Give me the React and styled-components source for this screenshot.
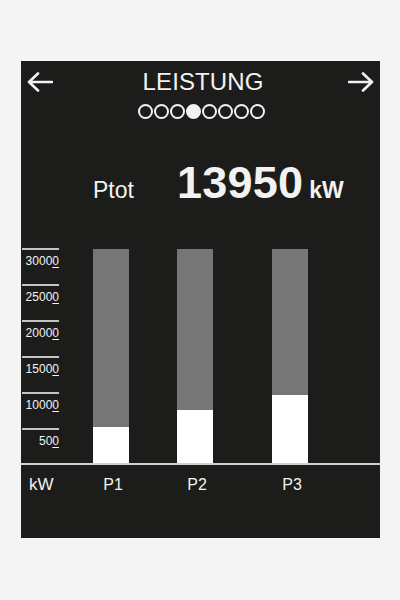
import styled, { createGlobalStyle } from 'styled-components';

const GlobalStyle = createGlobalStyle`
  html, body {
    margin: 0;
    padding: 0;
    background: #f4f4f4;
    font-family: "Liberation Sans", Arial, sans-serif;
  }
`;

const Panel = styled.div`
  margin: 61px 0 0 21px;
  width: 359px;
  height: 477px;
  background: #1c1c1a;
  color: #f2f2f2;
  display: flex;
  flex-direction: column;
`;

const Header = styled.div`
  display: grid;
  grid-template-columns: 26px 1fr 26px;
  align-items: center;
  height: 24px;
  margin-top: 9px;
  padding: 0 6px;
`;

const Title = styled.div`
  font-size: 24px;
  line-height: 24px;
  text-align: center;
  padding-left: 5px;
  letter-spacing: 0.1px;
`;

const Dots = styled.div`
  display: flex;
  justify-content: center;
  gap: 1px;
  margin-top: 10px;
  padding-left: 1px;
`;

const Dot = styled.span`
  width: 15px;
  height: 15px;
  box-sizing: border-box;
  border-radius: 50%;
  border: 2px solid #f2f2f2;
  background: ${(p) => (p.$active ? '#f2f2f2' : 'transparent')};
`;

const Total = styled.div`
  display: flex;
  align-items: baseline;
  margin-top: 41px;
  padding-left: 72px;
  line-height: 1;
`;

const TotalLabel = styled.span`
  font-size: 23px;
  width: 84px;
`;

const TotalValue = styled.span`
  font-size: 45px;
  font-weight: bold;
  letter-spacing: 0.2px;
`;

const TotalUnit = styled.span`
  font-size: 23px;
  font-weight: bold;
  margin-left: 6px;
`;

const Chart = styled.div`
  display: grid;
  grid-template-columns: 72px 36px 48px 36px 59px 36px 1fr;
  margin-top: 43px;
  height: 215px;
`;

const Axis = styled.div`
  grid-column: 1;
  display: flex;
  flex-direction: column;
  width: 37px;
  padding-left: 1px;
`;

const Tick = styled.div`
  flex-shrink: 0;
  height: 36px;
  box-sizing: border-box;
  border-top: 2px solid #c4c4c4;
  padding-top: 5px;
  font-size: 12px;
  line-height: 12px;
  text-align: right;

  u {
    text-underline-offset: 2px;
  }
`;

const Bar = styled.div`
  grid-column: ${(p) => p.$col};
  margin-top: 1px;
  height: 214px;
  background: #767676;
  display: flex;
  flex-direction: column;
  justify-content: flex-end;
`;

const Fill = styled.div`
  background: #ffffff;
`;

const Baseline = styled.div`
  height: 2px;
  background: #d2d2d2;
`;

const Labels = styled.div`
  display: grid;
  grid-template-columns: 72px 36px 48px 36px 59px 36px 1fr;
  margin-top: 12px;
  font-size: 16px;
  line-height: 16px;
`;

const Label = styled.div`
  grid-column: ${(p) => p.$col};
  text-align: ${(p) => (p.$axis ? 'left' : 'center')};
  padding-left: ${(p) => (p.$axis ? '8px' : '4px')};
  font-size: ${(p) => (p.$axis ? '17px' : '16px')};
  white-space: nowrap;
`;

function Arrow({ dir }) {
  const flip = dir === 'right';
  return (
    <svg width="26" height="20" viewBox="0 0 26 20" style={flip ? { transform: 'scaleX(-1)' } : undefined}>
      <path d="M2 10 H25 M11 1.5 L2 10 L11 18.5" fill="none" stroke="#f2f2f2" strokeWidth="2.6" strokeLinecap="round" strokeLinejoin="round" />
    </svg>
  );
}

const ticks = ['3000', '2500', '2000', '1500', '1000', '50'];

const bars = [
  { label: 'P1', value: 2520, col: 2 },
  { label: 'P2', value: 3710, col: 4 },
  { label: 'P3', value: 4760, col: 6 },
];

const MAX = 15000;

export default function App() {
  return (
    <>
      <GlobalStyle />
      <Panel>
        <Header>
          <Arrow dir="left" />
          <Title>LEISTUNG</Title>
          <Arrow dir="right" />
        </Header>
        <Dots>
          {[0, 1, 2, 3, 4, 5, 6, 7].map((i) => (
            <Dot key={i} $active={i === 3} />
          ))}
        </Dots>
        <Total>
          <TotalLabel>Ptot</TotalLabel>
          <TotalValue>13950</TotalValue>
          <TotalUnit>kW</TotalUnit>
        </Total>
        <Chart>
          <Axis>
            {ticks.map((t) => (
              <Tick key={t}>
                {t}
                <u>0</u>
              </Tick>
            ))}
          </Axis>
          {bars.map((b) => (
            <Bar key={b.label} $col={b.col}>
              <Fill style={{ height: `${Math.round((b.value / MAX) * 214)}px` }} />
            </Bar>
          ))}
        </Chart>
        <Baseline />
        <Labels>
          <Label $col={1} $axis>kW</Label>
          {bars.map((b) => (
            <Label key={b.label} $col={b.col}>{b.label}</Label>
          ))}
        </Labels>
      </Panel>
    </>
  );
}
